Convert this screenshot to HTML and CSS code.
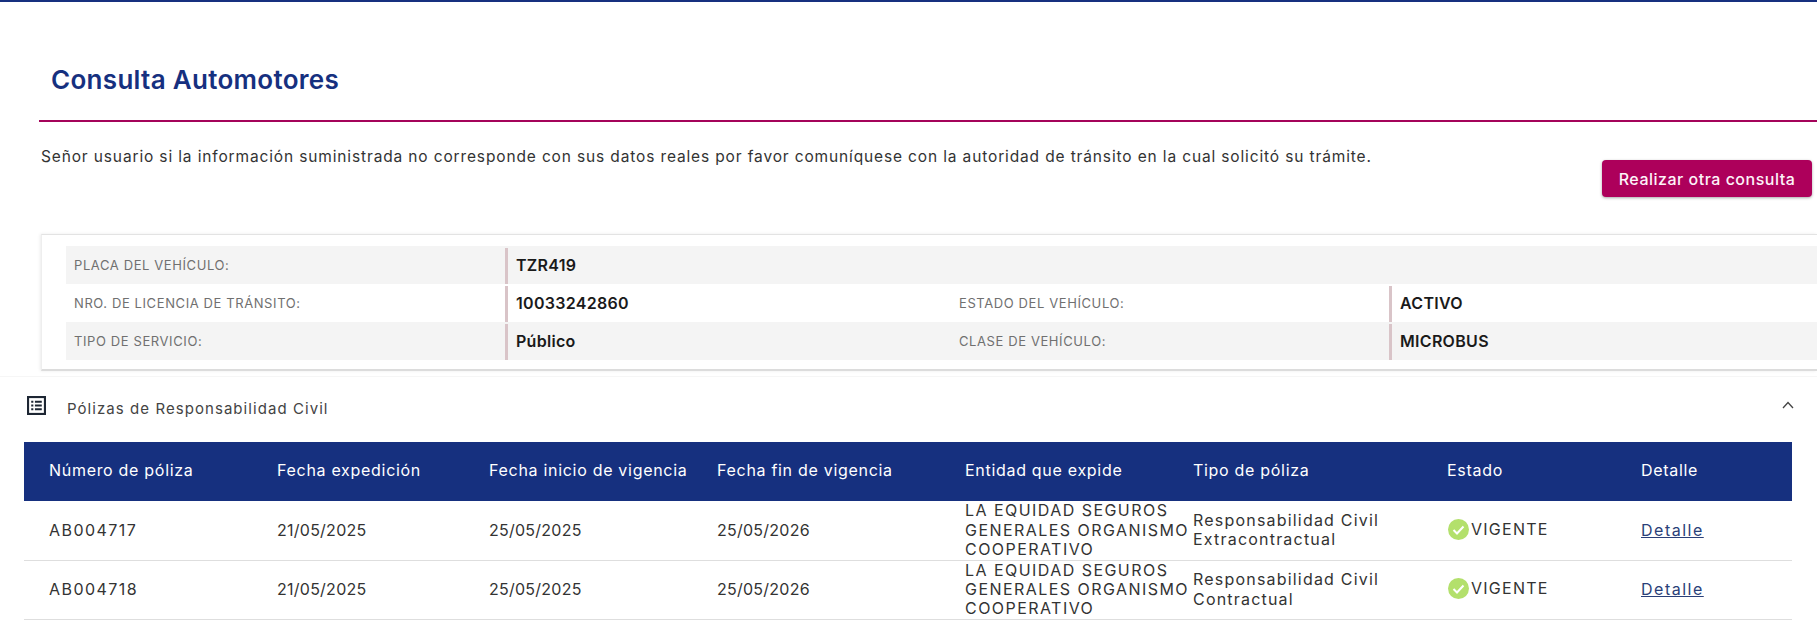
FILE: index.html
```html
<!DOCTYPE html>
<html lang="es">
<head>
<meta charset="utf-8">
<title>Consulta Automotores</title>
<link rel="stylesheet" href="styles.css">
</head>
<body>
<main class="page">
  <h1 class="title">Consulta Automotores</h1>
  <div class="notice">
    <p class="notice-text">Señor usuario si la información suministrada no corresponde con sus datos reales por favor comuníquese con la autoridad de tránsito en la cual solicitó su trámite.</p>
    <button class="btn" type="button">Realizar otra consulta</button>
  </div>
  <section class="card">
    <div class="info-row shaded">
      <div class="label">PLACA DEL VEHÍCULO:</div>
      <div class="value wide">TZR419</div>
    </div>
    <div class="info-row">
      <div class="label">NRO. DE LICENCIA DE TRÁNSITO:</div>
      <div class="value">10033242860</div>
      <div class="label">ESTADO DEL VEHÍCULO:</div>
      <div class="value">ACTIVO</div>
    </div>
    <div class="info-row shaded">
      <div class="label">TIPO DE SERVICIO:</div>
      <div class="value">Público</div>
      <div class="label">CLASE DE VEHÍCULO:</div>
      <div class="value">MICROBUS</div>
    </div>
  </section>
  <section class="panel">
    <header class="panel-head">
      <svg class="panel-icon" viewBox="0 0 18 18" width="19" height="19" aria-hidden="true">
        <rect x="1" y="1" width="16" height="16" fill="none" stroke="#1d2633" stroke-width="2"/>
        <path d="M4 4.500h2v2H4zM4 8h2v2H4zM4 11.500h2v2H4zM7.500 4.500h6.500v2H7.500zM7.500 8h6.500v2H7.500zM7.500 11.500h6.500v2H7.500z" fill="#1d2633"/>
      </svg>
      <span class="panel-title">Pólizas de Responsabilidad Civil</span>
      <svg class="chevron" viewBox="0 0 12 8" width="12" height="8" aria-hidden="true">
        <path d="M1 7l5-5.500 5 5.500" fill="none" stroke="#444" stroke-width="1.300"/>
      </svg>
    </header>
    <table class="policies">
      <colgroup>
        <col class="c1"><col class="c2"><col class="c3"><col class="c4"><col class="c5"><col class="c6"><col class="c7"><col class="c8">
      </colgroup>
      <thead>
        <tr>
          <th>Número de póliza</th><th>Fecha expedición</th><th>Fecha inicio de vigencia</th><th>Fecha fin de vigencia</th><th>Entidad que expide</th><th>Tipo de póliza</th><th>Estado</th><th>Detalle</th>
        </tr>
      </thead>
      <tbody>
        <tr>
          <td class="upper">AB004717</td><td>21/05/2025</td><td>25/05/2025</td><td>25/05/2026</td>
          <td class="upper nowrap">LA EQUIDAD SEGUROS<br>GENERALES ORGANISMO<br>COOPERATIVO</td>
          <td class="prose nowrap">Responsabilidad Civil<br>Extracontractual</td>
          <td><span class="status"><svg viewBox="0 0 21 21" width="21" height="21" aria-hidden="true"><circle cx="10.500" cy="10.500" r="10.500" fill="#b3e06c"/><path d="M5.500 11l3.500 3.500 6.500-7" fill="none" stroke="#fff" stroke-width="2"/></svg>VIGENTE</span></td>
          <td class="prose"><a class="link" href="#">Detalle</a></td>
        </tr>
        <tr>
          <td class="upper">AB004718</td><td>21/05/2025</td><td>25/05/2025</td><td>25/05/2026</td>
          <td class="upper nowrap">LA EQUIDAD SEGUROS<br>GENERALES ORGANISMO<br>COOPERATIVO</td>
          <td class="prose nowrap">Responsabilidad Civil<br>Contractual</td>
          <td><span class="status"><svg viewBox="0 0 21 21" width="21" height="21" aria-hidden="true"><circle cx="10.500" cy="10.500" r="10.500" fill="#b3e06c"/><path d="M5.500 11l3.500 3.500 6.500-7" fill="none" stroke="#fff" stroke-width="2"/></svg>VIGENTE</span></td>
          <td class="prose"><a class="link" href="#">Detalle</a></td>
        </tr>
      </tbody>
    </table>
  </section>
</main>
</body>
</html>
```
FILE: styles.css
```css
* { box-sizing: border-box; }
html, body { margin: 0; height: 626px; overflow: hidden; background: #fff; }
body {
  width: 1817px;
  border-top: 2px solid #16307f;
  font-family: Inter, "Liberation Sans", sans-serif;
  color: #2b2b2b;
}
.page { display: flex; flex-direction: column; }
.title {
  margin: 0 0 0 39px;
  height: 120px;
  padding: 62px 0 0 12px;
  border-bottom: 2px solid #a4045a;
  font-size: 26px;
  line-height: 32px;
  font-weight: 600;
  letter-spacing: 0.3px;
  color: #16307f;
}
.notice {
  display: flex;
  justify-content: space-between;
  align-items: flex-start;
  height: 112px;
  padding: 25px 5px 0 41px;
}
.notice-text {
  margin: 0;
  font-size: 15.500px;
  line-height: 20px;
  letter-spacing: 0.86px;
  white-space: nowrap;
  color: #333;
}
.btn {
  margin-top: 13px;
  width: 210px;
  height: 37px;
  border: 0;
  border-radius: 4px;
  background: #ad005b;
  color: #fdf3f8;
  font: 500 16px Inter, sans-serif;
  letter-spacing: 0.5px;
  box-shadow: 0 1px 3px rgba(0, 0, 0, .35);
}
.card {
  margin-left: 41px;
  height: 137px;
  padding: 11px 0 11px 24px;
  border-top: 1px solid #e3e3e3;
  border-left: 1px solid #eee;
  border-bottom: 2px solid #dcdcdc;
  box-shadow: -1px 0 3px rgba(0, 0, 0, .08);
}
.info-row {
  display: grid;
  grid-template-columns: 439px 446px 438px 1fr;
  height: 38px;
}
.shaded { background: #f4f4f4; }
.label {
  padding-left: 8px;
  font-size: 13px;
  line-height: 38px;
  color: #707070;
  letter-spacing: 0.6px;
}
.value {
  margin-top: 2px;
  padding-left: 8px;
  border-left: 3px solid #d9c4c8;
  font-size: 16px;
  line-height: 34px;
  font-weight: 600;
  letter-spacing: 0.3px;
  color: #1a1a1a;
}
.value.wide { grid-column: 2 / -1; }
.panel { margin-top: 5px; }
.panel-head {
  display: flex;
  align-items: center;
  height: 66px;
  padding: 0 23px 2px 27px;
  border-top: 1px solid #f6f6f6;
}
.panel-icon { margin-top: -7px; }
.panel-title {
  margin-left: 21px;
  font-size: 15px;
  letter-spacing: 1.06px;
  color: #444;
}
.chevron { margin-left: auto; margin-top: -8px; }
.policies {
  margin-left: 24px;
  width: 1768px;
  table-layout: fixed;
  border-collapse: collapse;
  font-size: 16px;
}
.c1 { width: 253px; }
.c2 { width: 212px; }
.c3 { width: 228px; }
.c4 { width: 248px; }
.c5 { width: 228px; }
.c6 { width: 254px; }
.c7 { width: 194px; }
.c8 { width: 151px; }
.policies th {
  height: 59px;
  padding: 0 0 3px;
  background: #16307f;
  color: #fff;
  font-weight: 400;
  text-align: left;
  letter-spacing: 0.7px;
}
.policies th:first-child { padding-left: 25px; }
.policies td:first-child { padding-left: 25px; }
.policies td {
  height: 59px;
  padding: 0;
  border-bottom: 1px solid #dedede;
  line-height: 19.200px;
  letter-spacing: 0.25px;
  color: #333;
}
.policies td.upper { letter-spacing: 1.45px; }
.policies td.prose { letter-spacing: 1.2px; }
.nowrap { white-space: nowrap; }
.status { display: inline-flex; align-items: center; gap: 2px; margin: 2px 0 0 1px; letter-spacing: 1.25px; }
.link { color: #2a3f78; letter-spacing: 1.5px; }
```
